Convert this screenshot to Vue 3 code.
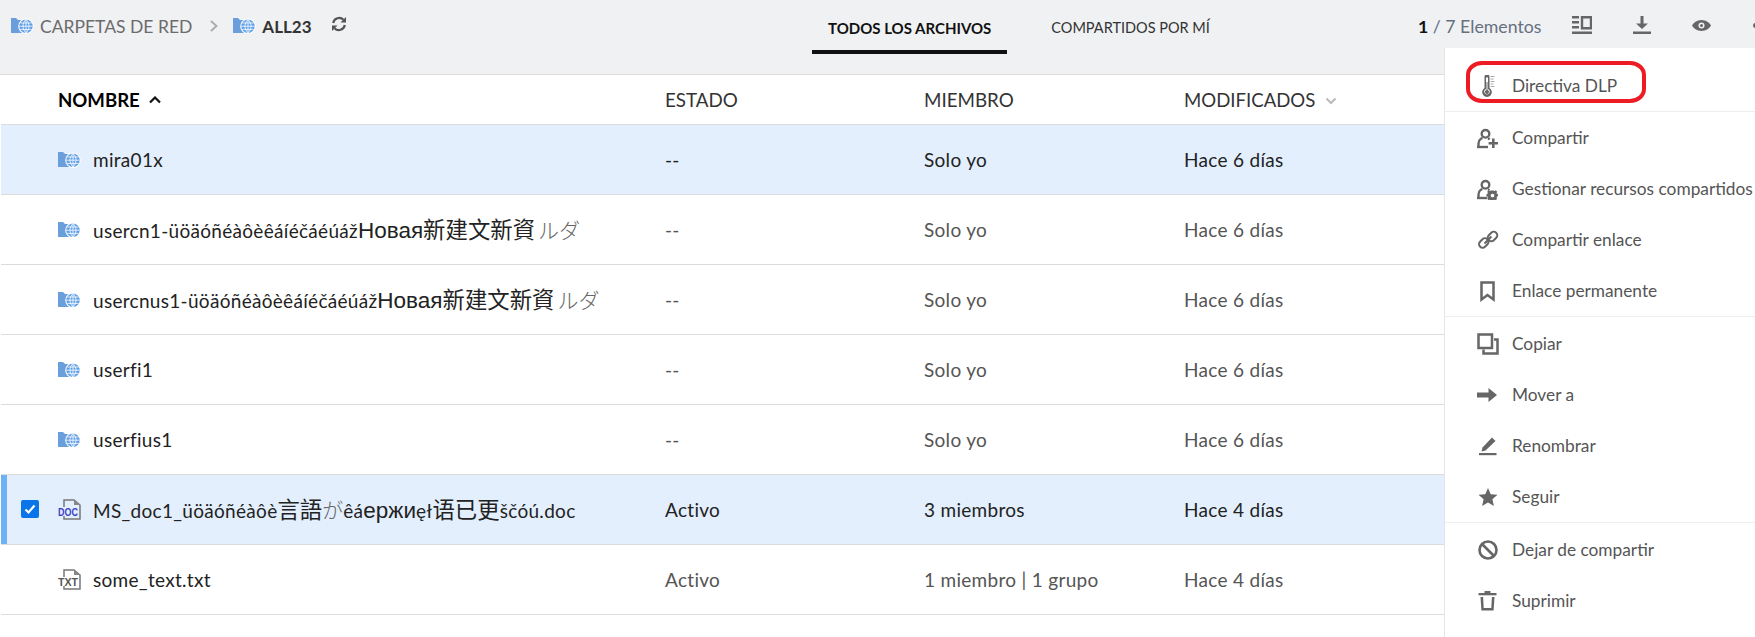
<script setup>
const stroke = (d, w = 2.4) => ({ d, fill: 'none', stroke: '#666', 'stroke-width': w })
const fill = (d) => ({ d, fill: '#666' })

const icons = {
  thermo: [
    fill('M7.500 2a2.500 2.500 0 0 1 5 0v11a4.800 4.800 0 1 1-5 0z'),
    { d: 'M9 2.500h2v11.500a2.800 2.800 0 1 1-2 0z', fill: '#fff' },
    { d: 'M9.500 7h1v8a2 2 0 1 1-1 0z', fill: '#666' },
    { d: 'M13.500 1.500h4M13.500 4h3M13.500 6.500h4M13.500 9h3M13.500 11.500h4', stroke: '#aaa', 'stroke-width': 1, fill: 'none' }
  ],
  share: [
    stroke('M8.500 3a3.800 3.800 0 0 1 0 7.600 3.800 3.800 0 0 1 0-7.600z'),
    stroke('M1.500 20v-3c0-3 2-5.500 4-6M11 11.500c.6.200 1.200.5 1.700.9'),
    stroke('M0 20h11'),
    fill('M15 11.500h2.600V15H21v2.600h-3.400V21H15v-3.400h-3.400V15H15z')
  ],
  manage: [
    stroke('M8.500 3a3.800 3.800 0 0 1 0 7.600 3.800 3.800 0 0 1 0-7.600z'),
    stroke('M1.500 20v-3c0-3 2-5.500 4-6M11 11.500c.6.200 1 .4 1.400.7'),
    stroke('M0 20h10'),
    fill('M16.500 12.500l1.300.4.900-.6 1.500 1.500-.6.900.4 1.300 1 .3v2l-1 .3-.4 1.300.6.900-1.500 1.500-.9-.6-1.300.4-.3 1h-2l-.3-1-1.300-.4-.9.6-1.500-1.500.6-.9-.4-1.300-1-.3v-2l1-.3.4-1.300-.6-.9 1.500-1.500.9.6 1.300-.4z'),
    { d: 'M15.500 15.700a1.800 1.800 0 1 0 .01 0z', fill: '#fff' }
  ],
  link: [
    stroke('M7.500 14.500l7-7', 2),
    { d: 'M11.800 6.200l2.500-2.500a3.400 3.400 0 0 1 4.800 0l.2.200a3.400 3.400 0 0 1 0 4.800l-2.500 2.500a3.400 3.400 0 0 1-4.800 0l-.2-.2a3.400 3.400 0 0 1 0-4.800z', fill: 'none', stroke: '#666', 'stroke-width': 2 },
    { d: 'M3 12.700l2.500-2.500a3.400 3.400 0 0 1 4.800 0l.2.200a3.400 3.400 0 0 1 0 4.800l-2.500 2.500a3.400 3.400 0 0 1-4.800 0l-.2-.2a3.400 3.400 0 0 1 0-4.800z', fill: 'none', stroke: '#666', 'stroke-width': 2 }
  ],
  bookmark: [stroke('M4.500 2.500h12v17l-6-4.500-6 4.500z', 2.500)],
  copy: [
    stroke('M1.500 1.500h13.500v13.500H1.500z', 2.500),
    stroke('M17 6.500h3.500v14H6.500v-4', 2.500)
  ],
  move: [fill('M0 8.500h11.500V4l8.500 7-8.500 7v-4.500H0z')],
  rename: [
    fill('M5.500 12.500L15 2.500 18.500 6 8.500 15.500l-4 1z'),
    fill('M2 18h17.500v2.200H2z')
  ],
  star: [fill('M11 2l2.700 6.200 6.800.6-5.100 4.500 1.500 6.700-5.900-3.500-5.900 3.500 1.500-6.700-5.100-4.500 6.800-.6z')],
  ban: [
    stroke('M11 2.500a8.500 8.500 0 1 1 0 17 8.500 8.500 0 0 1 0-17z', 2.600),
    stroke('M5 5l12 12', 2.600)
  ],
  trash: [
    fill('M1.500 3h18v2.300h-18z'),
    fill('M7.500 1h6v2h-6z'),
    fill('M3.500 7h2.600l.6 11h7.600l.6-11h2.600l-.9 13.500H4.400z')
  ]
}

const menuGroups = [
  [{ label: 'Directiva DLP', icon: 'thermo' }],
  [
    { label: 'Compartir', icon: 'share' },
    { label: 'Gestionar recursos compartidos', icon: 'manage' },
    { label: 'Compartir enlace', icon: 'link' },
    { label: 'Enlace permanente', icon: 'bookmark' }
  ],
  [
    { label: 'Copiar', icon: 'copy' },
    { label: 'Mover a', icon: 'move' },
    { label: 'Renombrar', icon: 'rename' },
    { label: 'Seguir', icon: 'star' }
  ],
  [
    { label: 'Dejar de compartir', icon: 'ban' },
    { label: 'Suprimir', icon: 'trash' }
  ]
]

const rows = [
  { name: [['usr', 'mira01x']], type: 'net', state: '--', member: 'Solo yo', date: 'Hace 6 días', tone: 'active' },
  { name: [['usr', 'usercn1-üöäóñéàôèêáíéčáéúáž'], ['ru', 'Новая'], ['cj', '新建文新資'], ['jp gap', 'ルダ']], type: 'net', state: '--', member: 'Solo yo', date: 'Hace 6 días' },
  { name: [['usr', 'usercnus1-üöäóñéàôèêáíéčáéúáž'], ['ru', 'Новая'], ['cj', '新建文新資'], ['jp gap', 'ルダ']], type: 'net', state: '--', member: 'Solo yo', date: 'Hace 6 días' },
  { name: [['usr', 'userfi1']], type: 'net', state: '--', member: 'Solo yo', date: 'Hace 6 días' },
  { name: [['usr', 'userfius1']], type: 'net', state: '--', member: 'Solo yo', date: 'Hace 6 días' },
  { name: [['usr', 'MS_doc1_üöäóñéàôè'], ['cj', '言語'], ['jp', 'が'], ['usr', 'êá'], ['ru', 'ержи'], ['usr', 'ęł'], ['cj', '语已更'], ['usr', 'šč'], ['usr', 'óú.doc']], type: 'doc', state: 'Activo', member: '3 miembros', date: 'Hace 4 días', tone: 'active', checked: true },
  { name: [['usr', 'some_text.txt']], type: 'txt', state: 'Activo', member: '1 miembro | 1 grupo', date: 'Hace 4 días' }
]
</script>

<template>
  <div class="page">
    <header class="topbar">
      <nav class="crumbs">
        <svg class="net" viewBox="0 0 23 16"><use href="#netfolder" /></svg>
        <span class="crumb">CARPETAS DE RED</span>
        <svg class="chev" viewBox="0 0 8 12"><path d="M1 1l5.500 5L1 11" fill="none" stroke="#aaa" stroke-width="1.800" /></svg>
        <svg class="net" viewBox="0 0 23 16"><use href="#netfolder" /></svg>
        <strong class="crumb-now">ALL23</strong>
        <svg class="refresh" viewBox="0 0 16 16">
          <path d="M2.200 7a6 6 0 0 1 10.300-3.200" fill="none" stroke="#555" stroke-width="2.200" />
          <path d="M15 1v5.500H9.500z" fill="#555" />
          <path d="M13.800 9a6 6 0 0 1-10.300 3.200" fill="none" stroke="#555" stroke-width="2.200" />
          <path d="M1 15V9.500h5.500z" fill="#555" />
        </svg>
      </nav>

      <div class="tabs">
        <span class="tab on">TODOS LOS ARCHIVOS</span>
        <span class="tab">COMPARTIDOS POR MÍ</span>
      </div>

      <div class="tools">
        <span class="count"><b>1</b> / 7 Elementos</span>
        <svg class="tool t1" viewBox="0 0 20 18">
          <path d="M0 0h7v2.400H0zM0 5h7v2.400H0zM0 10h7v2.400H0zM0 15.600h20V18H0z" fill="#666" />
          <path d="M10 1.200h9v11h-9z" fill="none" stroke="#666" stroke-width="2.400" />
        </svg>
        <svg class="tool t2" viewBox="0 0 18 18">
          <path d="M7.500 0h3v7.500H15L9 13 3 7.500h4.500zM0 15.600h18V18H0z" fill="#666" />
        </svg>
        <svg class="tool t3" viewBox="0 0 19 11">
          <path d="M9.500 0C14 0 17.500 2.800 19 5.500 17.500 8.200 14 11 9.500 11S1.500 8.200 0 5.500C1.500 2.800 5 0 9.500 0z" fill="#666" />
          <path d="M9.500 2.500a3 3 0 1 1 0 6 3 3 0 0 1 0-6z" fill="#f0f1f3" />
          <path d="M9.500 4a1.500 1.500 0 1 1 0 3 1.500 1.500 0 0 1 0-3z" fill="#666" />
        </svg>
        <span class="t4"></span>
      </div>
    </header>

    <svg class="defs" width="0" height="0">
      <defs>
        <g id="netfolder">
          <path d="M0 0h5l2 2h6v13H0z" fill="#6a9fdc" />
          <path d="M15 .4a7.800 7.800 0 1 1 0 15.600 7.800 7.800 0 0 1 0-15.600z" fill="#fff" />
          <path d="M15 1.500a6.700 6.700 0 1 1 0 13.400 6.700 6.700 0 0 1 0-13.400z" fill="#5f9fe6" />
          <path d="M15 1.500v13.400M8.300 8.200h13.400M9.300 5h11.400M9.300 11.400h11.400M15 1.500c-4 3.700-4 9.700 0 13.400M15 1.500c4 3.700 4 9.700 0 13.400" fill="none" stroke="#fff" stroke-width=".8" />
        </g>
      </defs>
    </svg>

    <section class="table">
      <div class="row head">
        <span class="hname"><b>NOMBRE</b><svg class="up" viewBox="0 0 12 8"><path d="M1 6.500l5-5 5 5" fill="none" stroke="#111" stroke-width="2.200" /></svg></span>
        <span>ESTADO</span>
        <span>MIEMBRO</span>
        <span class="hmod">MODIFICADOS<svg class="down" viewBox="0 0 12 8"><path d="M1.500 1.500l4.500 4.500 4.500-4.500" fill="none" stroke="#bbb" stroke-width="2.200" /></svg></span>
      </div>

      <div v-for="(r, i) in rows" :key="i" class="row item" :class="{ active: r.tone === 'active', picked: r.checked }">
        <span v-if="r.checked" class="check">
          <svg viewBox="0 0 18 18"><path d="M4.500 9.500l3 3 6-7" fill="none" stroke="#fff" stroke-width="2.200" /></svg>
        </span>
        <span class="cell-name">
          <svg v-if="r.type === 'net'" class="net" viewBox="0 0 23 16"><use href="#netfolder" /></svg>
          <svg v-else class="file" viewBox="0 0 23 21">
            <path d="M6 8V1h10l6 5v14H6v-3" fill="none" stroke="#777" stroke-width="1.500" />
            <path d="M16 1v5h6z" fill="#888" />
            <text x="0" y="17" textLength="20" lengthAdjust="spacingAndGlyphs" class="filetag" :class="r.type">{{ r.type.toUpperCase() }}</text>
          </svg>
          <span class="label">
            <span v-for="(seg, k) in r.name" :key="k" :class="seg[0]">{{ seg[1] }}</span>
          </span>
        </span>
        <span>{{ r.state }}</span>
        <span>{{ r.member }}</span>
        <span>{{ r.date }}</span>
      </div>
    </section>

    <aside class="menu">
      <div v-for="(g, gi) in menuGroups" :key="gi" class="group">
        <div v-for="m in g" :key="m.label" class="entry">
          <svg class="micon" viewBox="0 0 22 22">
            <path v-for="(p, pi) in icons[m.icon]" :key="pi" v-bind="p" />
          </svg>
          <span>{{ m.label }}</span>
        </div>
      </div>
      <div class="mark"></div>
    </aside>
  </div>
</template>

<style>
html, body { margin: 0; overflow: hidden; background: #fff; }
</style>

<style scoped>
.page {
  position: relative;
  width: 1755px;
  height: 637px;
  overflow: hidden;
  font-family: Lato, "Noto Sans", sans-serif;
  font-size: 18px;
  color: #555;
}
.topbar {
  height: 74px;
  background: #f0f1f3;
  border-bottom: 1px solid #dcdcdc;
  display: flex;
  align-items: flex-start;
}
.crumbs {
  display: flex;
  align-items: center;
  height: 52px;
  padding-left: 11px;
  width: 801px;
  flex: none;
  box-sizing: border-box;
  color: #6b6b6b;
  font-size: 17.500px;
}
.net { width: 23px; height: 16px; flex: none; }
.crumb { margin-left: 6px; }
.chev { width: 8px; height: 12px; margin: 0 15px 0 18px; }
.crumb-now { margin-left: 6px; color: #333; font-weight: 700; font-size: 17px; }
.refresh { width: 16px; height: 16px; margin-left: 19px; margin-top: -4px; }
.defs { position: absolute; }
.tabs { display: flex; height: 54px; width: 617px; flex: none; padding-left: 11px; box-sizing: border-box; }
.tab {
  padding: 0 16px;
  height: 50px;
  line-height: 56px;
  font-size: 14.500px;
  color: #333;
  margin-right: 28px;
  border-bottom: 4px solid transparent;
}
.tab.on { color: #111; font-weight: 700; font-size: 15px; border-bottom-color: #111; }
.tools { display: flex; align-items: center; height: 52px; flex: none; }
.count { font-size: 17.700px; color: #65707f; width: 154px; flex: none; }
.count b { color: #111; }
.tool { flex: none; }
.t1 { width: 20px; height: 18px; margin-top: -2px; }
.t2 { width: 18px; height: 18px; margin-left: 41px; margin-top: -2px; }
.t3 { width: 19px; height: 11px; margin-left: 41px; margin-top: -2px; }
.t4 { width: 5px; height: 5px; margin-left: 42px; margin-top: -2px; border-radius: 50%; background: #666; flex: none; }
.table { margin-left: 1px; }
.row {
  display: grid;
  grid-template-columns: 664px 259px 260px 1fr;
  align-items: center;
  border-bottom: 1px solid #dcdcdc;
  position: relative;
}
.head { height: 49px; color: #333; font-size: 18.800px; }
.hname { display: flex; align-items: center; padding-left: 57px; color: #000; font-size: 18.600px; }
.up { width: 12px; height: 8px; margin-left: 9px; }
.hmod { display: flex; align-items: center; font-size: 18.600px; }
.down { width: 12px; height: 8px; margin-left: 10px; margin-top: 3px; }
.item { height: 69px; color: #555; font-size: 19px; letter-spacing: .3px; }
.item .cell-name { color: #222; }
.item.active { background: #e3effd; color: #222; }
.item.picked { box-shadow: inset 6px 0 0 #6eb1f5; }
.cell-name { display: flex; align-items: center; padding-left: 57px; }
.file { width: 23px; height: 21px; margin-right: 12px; flex: none; }
.cell-name .net { margin-right: 12px; }
.filetag { font: 700 10.500px "Liberation Sans", sans-serif; letter-spacing: 0; }
.filetag.doc { fill: #3a3fc4; }
.filetag.txt { fill: #555; }
.label { white-space: nowrap; line-height: 24px; }
.ru { font-family: "Liberation Sans", sans-serif; font-size: 22.500px; letter-spacing: 0; line-height: 1; }
.cj { font-family: "Noto Sans CJK SC", sans-serif; font-size: 22.400px; letter-spacing: 0; line-height: 1; }
.jp { font-family: "Noto Sans CJK JP", sans-serif; font-size: 21px; font-weight: 300; color: #666; letter-spacing: 0; line-height: 1; }
.gap { margin-left: 3px; }
.check {
  position: absolute;
  left: 20px;
  top: 25px;
  width: 18px;
  height: 18px;
  background: #0a75e8;
  border-radius: 2px;
}
.check svg { display: block; }
.menu {
  position: absolute;
  left: 1444px;
  top: 48px;
  width: 340px;
  height: 589px;
  background: #fff;
  border-left: 1px solid #e6e6e6;
  box-sizing: border-box;
}
.group { border-bottom: 1px solid #eee; }
.group:first-child { padding-top: 12px; }
.group:nth-child(4) { border-bottom: 0; }
.group:nth-child(n+3) { padding-top: 1px; }
.entry {
  display: flex;
  align-items: center;
  height: 51px;
  padding-left: 32px;
  white-space: nowrap;
  color: #555;
  font-size: 17.300px;
}
.micon { width: 22px; height: 22px; margin-right: 13px; flex: none; }
.mark {
  position: absolute;
  left: 21px;
  top: 13px;
  width: 180px;
  height: 42px;
  border: 4px solid #ed1c24;
  border-radius: 16px / 14px;
  box-sizing: border-box;
}
</style>
